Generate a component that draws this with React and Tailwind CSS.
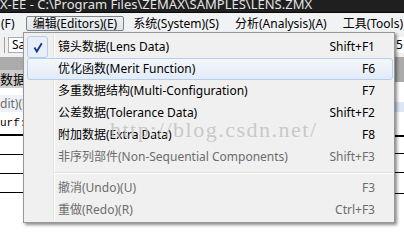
import React from "react";

const items = [
  { label: "镜头数据(Lens Data)", keys: "Shift+F1", checked: true },
  { label: "优化函数(Merit Function)", keys: "F6", hover: true },
  { label: "多重数据结构(Multi-Configuration)", keys: "F7" },
  { label: "公差数据(Tolerance Data)", keys: "Shift+F2" },
  { label: "附加数据(Extra Data)", keys: "F8" },
  { label: "非序列部件(Non-Sequential Components)", keys: "Shift+F3", disabled: true },
  { sep: true },
  { label: "撤消(Undo)(U)", keys: "F3", disabled: true },
  { label: "重做(Redo)(R)", keys: "Ctrl+F3", disabled: true },
];

const MenuItem = ({ item }) => {
  if (item.sep) {
    return (
      <div className="relative flex h-[9px] items-center pl-[26px]">
        <div className="h-[2px] w-full border-t border-b border-t-[#e0e0e0] border-b-white" />
      </div>
    );
  }
  return (
    <div
      className={
        "relative flex h-[22px] items-center justify-between rounded-[3px] border pl-[30px] pr-[17px] " +
        (item.hover
          ? "border-[#b4cfee] bg-gradient-to-b from-[#f3f7fc] to-[#e3ebf7] "
          : "border-transparent ") +
        (item.disabled ? "text-[#6d6d6d]" : "text-black")
      }
    >
      {item.checked && (
        <div className="absolute left-[-1px] top-[-1px] flex h-[22px] w-[21px] items-center justify-center rounded-[3px] border border-[#b4cfee] bg-[#e8eff9]">
          <svg width="10" height="11" viewBox="0 0 10 11">
            <path d="M1.5 5.5 L3.8 9.5 L8.8 1.2" fill="none" stroke="#15308f" strokeWidth="1.8" />
          </svg>
        </div>
      )}
      <span>{item.label}</span>
      <span>{item.keys}</span>
    </div>
  );
};

const BarItem = ({ children, active, className = "" }) => (
  <div
    className={
      "flex h-[15px] items-center rounded-[2px] border px-[6px] " +
      (active
        ? "border-[#7e8185] bg-gradient-to-b from-[#eef1f5] to-[#dfe4ea] "
        : "border-transparent ") +
      className
    }
  >
    {children}
  </div>
);

export default function App() {
  return (
    <div className="relative h-[241px] w-[404px] overflow-hidden bg-white font-['Noto_Sans','Noto_Sans_CJK_SC',sans-serif] text-[12px] leading-[14px] text-black">
      {/* Title bar */}
      <div className="h-[13px] overflow-hidden bg-[#1f1f1f] border-b border-b-[#0a0a0a]">
        <div className="mt-[-2px] whitespace-nowrap text-[13px] leading-[13px] text-[#e4e4e4]">
          X-EE - C:\Program Files\ZEMAX\SAMPLES\LENS.ZMX
        </div>
      </div>

      {/* Menu bar */}
      <div className="flex h-[20px] items-start gap-[2px] whitespace-nowrap bg-[#f1f2f4] pt-[3px]">
        <BarItem className="pl-[0px] pr-[8px]">(F)</BarItem>
        <BarItem active>编辑(Editors)(E)</BarItem>
        <BarItem>系统(System)(S)</BarItem>
        <BarItem>分析(Analysis)(A)</BarItem>
        <BarItem>工具(Tools)</BarItem>
      </div>

      {/* Editor window behind the menu */}
      <div className="flex h-[208px]">
        <div className="flex w-[60px] flex-col">
          <div className="flex h-[24px] items-center bg-[#f0f0f0] pl-[4px]">
            <div className="h-[16px] w-px bg-[#a0a0a0]" />
            <div className="ml-[3px] flex h-[16px] w-[50px] items-center border border-[#a5acb5] bg-white pl-[3px] text-[12px]">
              Sa
            </div>
          </div>
          <div className="h-[13px] bg-[#ababab]" />
          <div className="flex h-[18px] items-center bg-[#cdcdcd] pl-[0px] text-[13px]">数据</div>
          <div className="h-[7px]" />
          <div className="flex h-[17px] items-center bg-[#eef2f8] pl-[0px] text-[#6d6d6d]">dit)(E</div>
          <div className="flex h-[21px] items-center font-['Liberation_Mono',monospace] text-[11px]">urf:</div>
          <div className="h-px" />
          <div className="h-[2px] bg-black" />
          <div className="h-[18px]" />
          <div className="h-px bg-black" />
          <div className="h-[18px]" />
          <div className="h-px bg-black" />
          <div className="h-[18px]" />
          <div className="h-px bg-black" />
        </div>
        <div className="flex-1" />
        <div className="flex w-[10px] flex-col">
          <div className="flex h-[24px] items-center bg-[#f0f0f0]">
            <div className="flex h-[16px] w-full items-center border-l border-[#a5acb5] bg-white pl-[1px] text-[12px]">
              5
            </div>
          </div>
          <div className="h-[25px] bg-[#ababab]" />
          <div className="h-[20px]" />
          <div className="h-[10px] bg-[#dce6f4]" />
          <div className="h-[23px]" />
          <div className="h-[2px] bg-black" />
          <div className="h-[16px]" />
          <div className="h-px bg-black" />
          <div className="h-[18px]" />
          <div className="h-px bg-black" />
          <div className="h-[20px]" />
          <div className="h-px bg-black" />
        </div>
      </div>

      {/* Dropdown menu */}
      <div className="absolute left-[23px] top-[32px] h-[191px] w-[372px] border border-[#979797] bg-[#f0f0f0] pb-[1px] pl-[3px] pr-[1px] pt-[3px] whitespace-nowrap shadow-[2px_2px_3px_rgba(0,0,0,0.45)]">
        <div className="absolute bottom-[1px] left-[29px] top-[1px] w-px bg-[#e2e3e3]" />
        <div className="absolute bottom-[1px] left-[30px] top-[1px] w-px bg-white" />
        {items.map((item, i) => (
          <MenuItem key={i} item={item} />
        ))}
      </div>

      {/* Watermark */}
      <div className="pointer-events-none absolute left-[110px] top-[119px] whitespace-nowrap font-['Liberation_Serif',serif] text-[22px] leading-[22px] tracking-[1.5px] text-[#c0c0c0] opacity-80">
        http://blog.csdn.net/
      </div>
    </div>
  );
}
